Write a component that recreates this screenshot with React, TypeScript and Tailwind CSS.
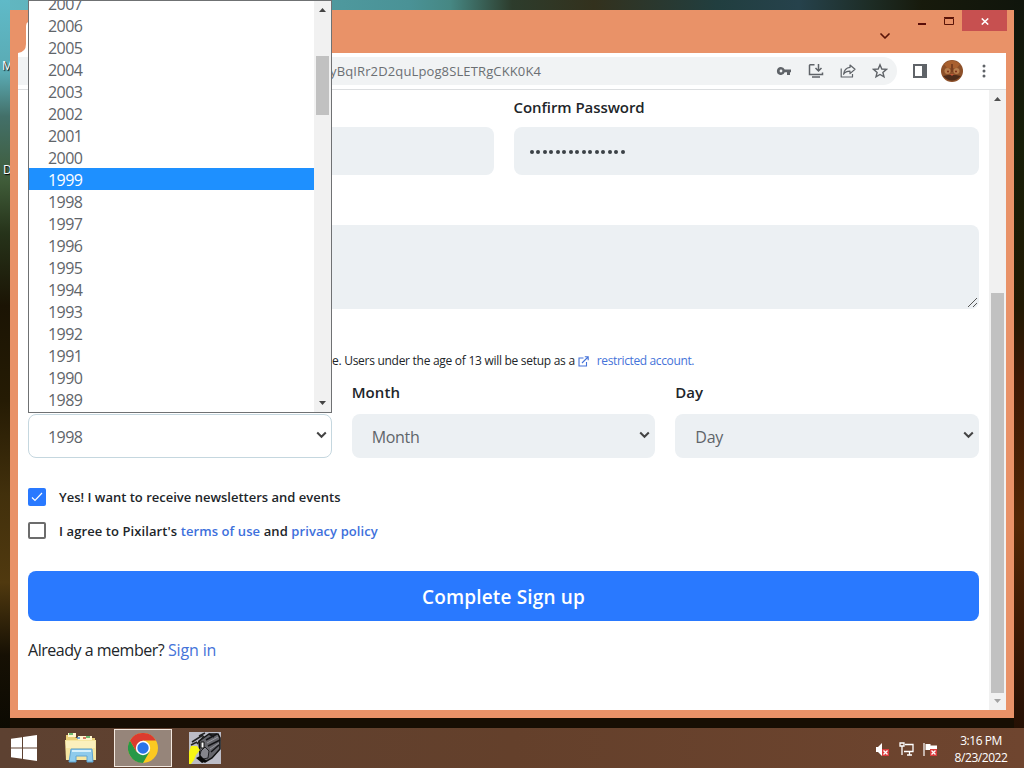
import { ChevronDown } from "lucide-react";

const years = [2007, 2006, 2005, 2004, 2003, 2002, 2001, 2000, 1999, 1998, 1997, 1996, 1995, 1994, 1993, 1992, 1991, 1990, 1989];

function KeyIcon() {
  return (
    <svg width="16" height="16" viewBox="0 0 16 16" fill="#5f6368">
      <path fillRule="evenodd" d="M5 4a4 4 0 1 0 3.700 5.300H11V12h3V9.300h1V6.600H8.700A4 4 0 0 0 5 4Zm0 2.600a1.400 1.400 0 1 1 0 2.800 1.400 1.400 0 0 1 0-2.800Z" />
    </svg>
  );
}

function InstallIcon() {
  return (
    <svg width="16" height="16" viewBox="0 0 16 16" fill="none" stroke="#5f6368" strokeWidth="1.500">
      <path d="M6.500 1.800H2.200Q1.500 1.800 1.500 2.500V11.500H14.500V9.500M4 14h8M10.500 1v6.500M7.500 5l3 3 3-3" />
    </svg>
  );
}

function ShareIcon() {
  return (
    <svg width="16" height="16" viewBox="0 0 16 16" fill="none" stroke="#5f6368" strokeWidth="1.200" strokeLinejoin="round">
      <path d="M1.200 5.500V14H12.500V11" />
      <path d="M10 2l5 4.300-5 4.300V8.200C7 8.200 5 9 3.600 11.300 4 7.500 6.500 4.800 10 4.400Z" />
    </svg>
  );
}

function StarIcon() {
  return (
    <svg width="16" height="16" viewBox="0 0 16 16" fill="none" stroke="#5f6368" strokeWidth="1.400">
      <path d="M8 1.800l1.800 4.200 4.600.4-3.500 3 1.100 4.500L8 11.500l-4 2.400 1.100-4.500-3.500-3 4.600-.4Z" />
    </svg>
  );
}

function ExternalIcon() {
  return (
    <svg className="ml-[3px] mr-[8px]" width="11" height="11" viewBox="0 0 11 11" fill="none" stroke="#4573d9" strokeWidth="1.100">
      <path d="M5.500 2H1v8h7.500V6M4 7l6-6M6.800.8h3.400v3.400" />
    </svg>
  );
}

function Avatar() {
  return (
    <svg width="22" height="22" viewBox="0 0 22 22">
      <circle cx="11" cy="11" r="11" fill="#8d5029" />
      <path d="M3 4Q11-3 19 4L16 8H6Z" fill="#a9602f" />
      <path d="M2 16Q11 25 20 16L15 15H7Z" fill="#4d2b1a" />
      <circle cx="6.500" cy="11" r="3" fill="#b97f4e" />
      <circle cx="15.500" cy="11" r="3" fill="#b97f4e" />
      <circle cx="7" cy="11.500" r="1" fill="#7a2c18" />
      <circle cx="15" cy="11.500" r="1" fill="#7a2c18" />
      <path d="M9 14h4l-2 2Z" fill="#c4573a" />
      <path d="M10 4h2v8h-2Z" fill="#7b4020" />
    </svg>
  );
}

function Titlebar() {
  return (
    <div className="flex h-[43px] items-start justify-end">
      {/* left edge of the active tab */}
      <svg className="mr-auto ml-[8px]" width="10" height="43">
        <path d="M0 43Q8 42 8 34V16Q8 13 10 12V43Z" fill="#fff" />
      </svg>
      <ChevronDown className="mt-[18px] mr-[25px]" width={16} height={16} color="#5a1408" strokeWidth={2.6} />
      <svg className="mt-[13px]" width="8" height="2">
        <rect width="8" height="2" fill="#5a0d08" />
      </svg>
      <svg className="mt-[7px] ml-[18px]" width="10" height="8">
        <path d="M.5 1.500h9v6h-9ZM0 .5h10" fill="none" stroke="#5a1408" />
      </svg>
      <div className="mr-[7px] ml-[8px] flex h-[21px] w-[45px] items-center justify-center bg-[#c75050]">
        <svg className="mt-[2px]" width="8" height="7" viewBox="0 0 9 8" stroke="#fff" strokeWidth="1.700">
          <path d="M.8.500l7.400 7M8.200.500l-7.400 7" />
        </svg>
      </div>
    </div>
  );
}

function Toolbar() {
  return (
    <div className="flex h-[37px] items-center border-b border-[#dcdee0] bg-white">
      <div className="flex h-[28px] w-[879px] items-center rounded-r-full bg-[#f1f3f4] pl-[312px]">
        <span className="pt-px text-[13px] tracking-[0.13px] whitespace-nowrap text-[#6b6f73]">yBqIRr2D2quLpog8SLETRgCKK0K4</span>
        <div className="mr-[9px] ml-auto flex gap-4">
          <KeyIcon />
          <InstallIcon />
          <ShareIcon />
          <StarIcon />
        </div>
      </div>
      <svg className="ml-[16px]" width="14" height="14" viewBox="0 0 14 14" fill="none">
        <path d="M1 1h12v12H1Z" stroke="#5f6368" strokeWidth="2" />
        <path d="M9 0h5v14H9Z" fill="#5f6368" />
      </svg>
      <div className="ml-[14px]">
        <Avatar />
      </div>
      <svg className="ml-[19px]" width="4" height="14" viewBox="0 0 4 14" fill="#5f6368">
        <circle cx="2" cy="2" r="1.500" />
        <circle cx="2" cy="7" r="1.500" />
        <circle cx="2" cy="12" r="1.500" />
      </svg>
    </div>
  );
}

function Select({ value, open = false }: { value: string; open?: boolean }) {
  return (
    <div
      className={`flex h-[44px] items-center justify-between rounded-lg text-[16px] text-[#5f656a] ${
        open ? "border border-[#c5d7df] bg-white pr-[4px] pl-[19px]" : "bg-[#ecf0f3] pr-[5px] pl-5"
      }`}
    >
      <span className={open ? "pt-px tracking-[-0.55px]" : "pt-px tracking-[-0.3px]"}>{value}</span>
      <svg className="-mt-[2px]" width="11" height="8" viewBox="0 0 11 8" fill="none" stroke="#444" strokeWidth="2">
        <path d="M1.200 1.500l4.300 4.300 4.300-4.300" />
      </svg>
    </div>
  );
}

function Scrollbar() {
  return (
    <div className="flex w-[17px] flex-col items-center bg-[#f1f1f1]">
      <svg className="mt-[7px]" width="7" height="4">
        <path d="M0 4L3.500 0 7 4Z" fill="#505050" />
      </svg>
      <div className="mt-[192px] h-[400px] w-[13px] bg-[#c1c1c1]" />
      <svg className="mt-[6px]" width="7" height="4">
        <path d="M0 0L3.500 4 7 0Z" fill="#a3a3a3" />
      </svg>
    </div>
  );
}

function SignupForm() {
  return (
    <div className="flex-1 px-[10px] pt-[7px] text-[#212529]">
      <div className="grid grid-cols-2 gap-5">
        <div className="pt-[30px]">
          <div className="h-[48px] rounded-lg bg-[#ecf0f3]" />
        </div>
        <div>
          <div className="h-[30px] text-[15px] leading-[20px] font-semibold tracking-[-0.07px]">Confirm Password</div>
          <div className="flex h-[48px] items-center gap-[2.500px] rounded-lg bg-[#ecf0f3] pt-px pl-[16px]">
            {Array.from({ length: 15 }, (_, i) => (
              <span key={i} className="h-[4px] w-[4px] rounded-full bg-[#3c4146]" />
            ))}
          </div>
        </div>
      </div>

      <div className="mt-[50px] flex h-[84px] items-end justify-end rounded-lg bg-[#ecf0f3] p-[2px]">
        <svg width="9" height="9" stroke="#555" strokeWidth="1">
          <path d="M0 9L9 0M5 9L9 5" />
        </svg>
      </div>

      <div className="mt-[42px] flex h-[20px] items-center pl-[304px] text-[12px] whitespace-nowrap">
        <span className="tracking-[-0.28px]">e. Users under the age of 13 will be setup as a</span>
        <ExternalIcon />
        <span className="tracking-[-0.37px] text-[#4573d9]">restricted account.</span>
      </div>

      <div className="mt-[11px] grid grid-cols-3 gap-5">
        <div className="pt-[32px]">
          <Select value="1998" open />
        </div>
        <div>
          <div className="h-[32px] text-[15px] leading-[20px] font-semibold tracking-[0.1px]">Month</div>
          <Select value="Month" />
        </div>
        <div>
          <div className="h-[32px] text-[15px] leading-[20px] font-semibold">Day</div>
          <Select value="Day" />
        </div>
      </div>

      <div className="mt-[30px] flex h-[18px] items-center gap-[13px] text-[13px] font-semibold">
        <span className="flex h-[18px] w-[18px] items-center justify-center rounded-[2px] bg-[#2979ff]">
          <svg width="12" height="10" viewBox="0 0 12 10" fill="none" stroke="#fff" strokeWidth="1.200">
            <path d="M1 5.500L4 8.500 11 1" />
          </svg>
        </span>
        <span className="pt-px">Yes! I want to receive newsletters and events</span>
      </div>
      <div className="mt-[16px] flex h-[18px] items-center gap-[13px] text-[13px] font-semibold">
        <span className="mb-px h-[17px] w-[18px] rounded-[2px] border-2 border-[#6c6c6c] bg-white" />
        <span className="pt-px tracking-[0.09px]">
          I agree to Pixilart's <span className="text-[#3d70dc]">terms of use</span> and{" "}
          <span className="text-[#3d70dc]">privacy policy</span>
        </span>
      </div>

      <div className="mt-[31px] flex h-[50px] items-center justify-center rounded-lg bg-[#2979ff] pt-[3px] text-[19px] font-semibold text-white">
        <span className="tracking-[0.15px]">Complete Sign up</span>
      </div>
      <div className="mt-[17px] text-[16px] leading-[24px]">
        <span className="tracking-[-0.48px]">Already a member? </span>
        <span className="tracking-[-0.15px] text-[#4573d9]">Sign in</span>
      </div>
    </div>
  );
}

function YearPopup() {
  return (
    <div className="absolute top-0 left-[28px] flex h-[413px] w-[304px] overflow-hidden border border-[#6f7173] bg-white">
      <div className="-mt-[9px] flex-1 text-[16px] leading-[24px] tracking-[-0.55px] text-[#5f656a]">
        {years.map((year) => (
          <div key={year} className={year === 1999 ? "h-[22px] bg-[#1e90ff] pl-[19px] text-white" : "h-[22px] pl-[19px]"}>
            {year}
          </div>
        ))}
      </div>
      <div className="flex w-[17px] flex-col items-center bg-[#f1f1f1]">
        <svg className="mt-[7px]" width="7" height="4">
          <path d="M0 4L3.500 0 7 4Z" fill="#444" />
        </svg>
        <div className="mt-[44px] h-[59px] w-[13px] bg-[#c1c1c1]" />
        <svg className="mt-auto mb-[7px]" width="7" height="4">
          <path d="M0 0L3.500 4 7 0Z" fill="#444" />
        </svg>
      </div>
    </div>
  );
}

function ExplorerIcon() {
  return (
    <svg width="34" height="32" viewBox="0 0 34 32">
      <path d="M2 3h8l2 3h19v22H2Z" fill="#e9cf78" />
      <path d="M4 1h8v4H4ZM14 4h14v4H14Z" fill="#fff6cf" />
      <path d="M5 2h4M22 5h4" stroke="#3fa652" strokeWidth="1.500" />
      <path d="M13 6h3" stroke="#4a90d4" strokeWidth="1.500" />
      <path d="M19 6h3" stroke="#c44c3c" strokeWidth="1.500" />
      <path d="M1 8h31v20H2Z" fill="#f6e6a1" />
      <path d="M2 9h29v7H2Z" fill="#fbf0bd" />
      <path d="M7 17h21l1 13h-6v-6H12v6H5Z" fill="#8ecbec" stroke="#5ea4d2" />
      <path d="M8 19h19" stroke="#d6f0fb" strokeWidth="2" />
    </svg>
  );
}

function ChromeIcon() {
  return (
    <svg width="30" height="30" viewBox="0 0 30 30">
      <circle cx="15" cy="15" r="15" fill="#fcc921" />
      <path d="M8.500 18.750L2 7.500A15 15 0 0 0 15 30l6.500-11.250Z" fill="#279847" />
      <path d="M15 7.500H28A15 15 0 0 0 2 7.500L8.500 18.750Z" fill="#db3b2f" />
      <circle cx="15" cy="15" r="7.200" fill="#fff" />
      <circle cx="15" cy="15" r="5.700" fill="#2a74e8" />
    </svg>
  );
}

function EngineIcon() {
  return (
    <svg width="32" height="32" viewBox="0 0 32 32">
      <path d="M0 0h32v32H0Z" fill="#bcbcc6" />
      <path d="M10 9L20 2h9l2 4v11l-8 9-7 4-5-6Z" fill="#66666c" stroke="#111" strokeWidth="1.500" />
      <path d="M17 8L28 2M19 14L31 8M22 20l8-7M20 2l5 3" stroke="#151518" strokeWidth="1.500" />
      <path d="M18 11L29 5M21 17l9-6" stroke="#98989f" />
      <path d="M12 19l4-4 4 4-1 7-5 1-3-4Z" fill="#85858c" stroke="#202024" />
      <path d="M3 10L14 3M8 12l7-8M2 13l6-3M10 4l6-3" stroke="#222" strokeWidth="1.500" />
      <path d="M2 14h6l3 4-4 5-2 5-3 4H0v-12Z" fill="#f7f514" />
      <path d="M7 26l4-2 7 5-5 2Z" fill="#080808" />
      <path d="M12 10h3v6h-3Z" fill="#fff" stroke="#111" />
    </svg>
  );
}

function ErrorBadge() {
  return (
    <g>
      <path d="M7 7h7v7H7Z" fill="#d93c3c" />
      <path d="M8.500 8.500l4 4M12.500 8.500l-4 4" stroke="#fff" strokeWidth="1.300" />
    </g>
  );
}

function Taskbar() {
  return (
    <div className="absolute bottom-0 left-0 flex h-[40px] w-full items-center bg-linear-to-r from-[#5d4131] via-[#64402b] to-[#6f452f] text-white">
      <svg className="ml-[11px]" width="26" height="26" viewBox="0 0 26 26" fill="#fff">
        <path d="M0 3.800L11 2.200v10.300H0ZM12 2.100L26 0v12.500H12ZM0 13.500h11v10.300L0 22.200ZM12 13.500h14V26l-14-2.100Z" />
      </svg>
      <div className="ml-[27px]">
        <ExplorerIcon />
      </div>
      <div className="ml-[16px] flex h-[38px] w-[58px] items-center justify-center border border-[#f3e8df] bg-[#96857a]">
        <ChromeIcon />
      </div>
      <div className="ml-[17px]">
        <EngineIcon />
      </div>
      <div className="ml-auto flex items-center gap-[9px] pt-[2px]">
        <svg width="15" height="15" viewBox="0 0 15 15">
          <path d="M1 5h2l4-4v13L3 10H1Z" fill="#fff" />
          <ErrorBadge />
        </svg>
        <svg width="15" height="15" viewBox="0 0 15 15" fill="none" stroke="#fff" strokeWidth="1.300">
          <path d="M6 2.500h8v7H5M8 13h5M10.500 9.500V13M1 1h4v3H1ZM3 4v9" />
        </svg>
        <svg width="15" height="15" viewBox="0 0 15 15">
          <path d="M1 1v13" stroke="#fff" strokeWidth="1.200" />
          <path d="M2.500 2h5v1.500H14V8H2.500Z" fill="#fff" />
          <ErrorBadge />
        </svg>
      </div>
      <div className="mr-[15px] ml-[15px] w-[56px] pt-px text-center text-[12px] leading-[17px] tracking-[-0.45px] whitespace-nowrap">
        <div>3:16 PM</div>
        <div className="-mx-2">8/23/2022</div>
      </div>
    </div>
  );
}

export default function App() {
  return (
    <div className="relative h-[768px] w-[1024px] overflow-hidden bg-[#170e03] font-['Open_Sans','Noto_Sans',sans-serif]">
      <div className="absolute top-0 left-0 h-[10px] w-full bg-[linear-gradient(90deg,#62b7c1_0%,#4a9296_40%,#468783_44%,#2d3c2c_50%,#33311d_58%,#213e3f_70%,#26424c_78%,#1d2c25_85%,#171a0c_90%,#10150c_100%)]" />
      <div className="absolute top-0 left-0 h-[728px] w-[10px] bg-[linear-gradient(#5fbac8_0%,#5aaab3_10%,#437069_16%,#3f5b38_25%,#26331a_32%,#1b1404_42%,#251b04_55%,#42300c_68%,#50390f_80%,#161004_90%,#0c0a02_100%)]" />
      <div className="absolute top-0 right-0 h-[728px] w-[10px] bg-[linear-gradient(#10150c,#171e08_20%,#211903_42%,#3c1905_52%,#522706_72%,#3e1b05_85%,#251004)]" />
      <div className="absolute top-[57px] left-[2px] text-[12px] text-white text-shadow-[1px_1px_1px_#000]">M</div>
      <div className="absolute top-[161px] left-[3px] text-[12px] text-white text-shadow-[1px_1px_1px_#000]">D</div>

      <div className="absolute top-[10px] left-[10px] h-[708px] w-[1004px] bg-[#e99268]">
        <Titlebar />
        <div className="mx-[8px] flex h-[657px] flex-col bg-white">
          <Toolbar />
          <div className="flex flex-1">
            <SignupForm />
            <Scrollbar />
          </div>
        </div>
      </div>
      <YearPopup />
      <Taskbar />
    </div>
  );
}
